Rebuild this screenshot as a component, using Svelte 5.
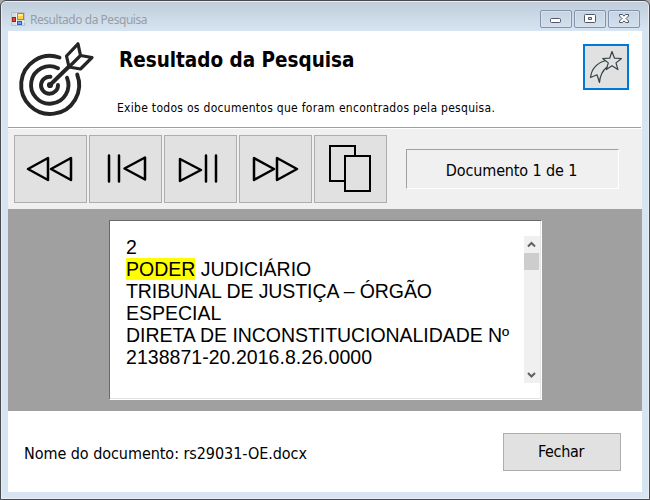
<script>
  const lines = [
    { text: 'TRIBUNAL DE JUSTIÇA – ÓRGÃO', spacing: -0.08 },
    { text: 'ESPECIAL', spacing: 0 },
    { text: 'DIRETA DE INCONSTITUCIONALIDADE Nº', spacing: -0.05 },
    { text: '2138871-20.2016.8.26.0000', spacing: 0.04 }
  ];
  const tools = ['first', 'previous', 'next', 'last', 'copy'];
</script>

<div class="window">
  <div class="titlebar">
    <svg class="appicon" width="15" height="15" viewBox="0 0 15 15">
      <path d="M.5 .5h13v13H.5z" fill="#d5dce5" stroke="#b9bec5" />
      <path d="M5.500 1v12M1 9.500h13" stroke="#eef1f5" />
      <rect x="6.500" y="1.500" width="6" height="6" fill="#ffd149" stroke="#bc8517" />
      <path d="M7 2h5v2H7z" fill="#ffe993" />
      <rect x="1.500" y="5.500" width="3" height="4" fill="#dc4b35" stroke="#a51c12" />
      <rect x="6.500" y="9.500" width="4" height="3" fill="#6f9ff2" stroke="#315eb8" />
    </svg>
    <span class="caption">Resultado da Pesquisa</span>
    <div class="controls">
      <span><svg width="30" height="16"><rect x="9.500" y="7.500" width="10" height="4" rx="1" fill="#fff" stroke="#52546b" /></svg></span>
      <span><svg width="30" height="16"><path fill-rule="evenodd" d="M10.500 3.500h9q1 0 1 1v6q0 1-1 1h-9q-1 0-1-1v-6q0-1 1-1zM13.500 6.500v2h3v-2z" fill="#fff" stroke="#52546b" /></svg></span>
      <span><svg width="30" height="16"><path d="M10.500 3.500h3l1.500 1.700 1.500-1.700h3v1.500l-2.500 2.500 2.500 2.500v1.500h-3l-1.500-1.700-1.500 1.700h-3V10l2.500-2.500L10.500 5z" fill="#fff" stroke="#52546b" /></svg></span>
    </div>
  </div>

  <div class="client">
    <header>
      <svg class="target" width="80" height="80" viewBox="0 0 80 80" fill="none" stroke="#252525" stroke-width="3.900" stroke-linecap="round" stroke-linejoin="round">
        <path d="M43.500 17.500A29 29 0 1 0 61.200 34.500" />
        <path d="M42 28.200A18.700 18.700 0 1 0 51 37.800" />
        <path d="M34.500 36.800A8.500 8.500 0 1 0 42 45" />
        <path d="M34 45 53.500 26" />
        <circle cx="34" cy="45" r="1.600" fill="#252525" stroke-width="3" />
        <path d="M53 27 50.500 16 62 3.800 64.500 15.500 53 27M64.500 15.500 76 17.500 64.500 29 53 27" stroke-width="3.200" />
      </svg>
      <div class="heading">
        <h1>Resultado da Pesquisa</h1>
        <p>Exibe todos os documentos que foram encontrados pela pesquisa.</p>
      </div>
      <button class="star" aria-label="Favorito">
        <svg width="42" height="42" viewBox="0 0 42 42" fill="none" stroke="#344247" stroke-width="1.200" stroke-linejoin="round">
          <path d="M27 5.500l2.500 6.700 7 .3-5.500 4.400 1.900 6.700-5.900-3.800-5.700 3.800 2-6.700-5.600-4.400 7-.3z" />
          <path d="M21 14.500C11.500 17 6.500 23.500 5.500 31.500l6.500-2.700 2.500 7.700C15 30 17 25 22 21" />
        </svg>
      </button>
    </header>

    <div class="toolbar">
      <div class="tools">
        {#each tools as tool}
          <button aria-label={tool}>
            <svg width="71" height="66" viewBox="0 0 71 66" fill="none" stroke="#000" stroke-width="2.500" stroke-linejoin="round" stroke-linecap="round">
              {#if tool === 'first'}
                <path d="M33 22v22L13 33zM56 22v22L36 33z" />
              {:else if tool === 'previous'}
                <path d="M19 19.500v26M29 19.500v26M55 21.500v22L34.500 32.500z" />
              {:else if tool === 'next'}
                <path d="M15 23v22L36 34zM41 19.500v26M51 19.500v26" />
              {:else if tool === 'last'}
                <path d="M14 22v22l20-11zM37 22v22l20-11z" />
              {:else}
                <path stroke-linejoin="miter" stroke-linecap="butt" stroke-width="2" d="M40 20V10H15v35h15M30 20h25v35H30z" />
              {/if}
            </svg>
          </button>
        {/each}
      </div>
      <div class="position"><span>Documento 1 de 1</span></div>
    </div>

    <main>
      <div class="document">
        <div class="text">
          <div>2</div>
          <div><mark>PODER</mark> JUDICIÁRIO</div>
          {#each lines as line}
            <div style="letter-spacing: {line.spacing}px">{line.text}</div>
          {/each}
        </div>
        <div class="scrollbar">
          <svg width="15" height="17"><path d="M4 10.500 7.500 7l3.500 3.500" fill="none" stroke="#606060" stroke-width="2" /></svg>
          <div class="thumb"></div>
          <svg class="down" width="15" height="17"><path d="M4 7 7.500 10.500 11 7" fill="none" stroke="#606060" stroke-width="2" /></svg>
        </div>
      </div>
    </main>

    <footer>
      <span class="filename">Nome do documento: rs29031-OE.docx</span>
      <button class="close"><span>Fechar</span></button>
    </footer>
  </div>
</div>

<style>
  :global(body) { margin: 0; background: #a9a9a9; overflow: hidden; }
  * { box-sizing: border-box; }
  .window {
    width: 650px; height: 500px; display: flex; flex-direction: column;
    padding: 0 7px 7px; border: 1px solid #4b4b4f; border-radius: 6px 6px 0 0;
    background: linear-gradient(#bfcddb, #d7e4f2 30px);
    box-shadow: inset 0 0 0 1px #e6edf5;
    font-family: "DejaVu Sans Condensed", "DejaVu Sans", sans-serif; color: #000;
  }
  svg { display: block; }
  .titlebar { height: 30px; flex: none; display: flex; padding-left: 3px; }
  .appicon { margin-top: 11px; flex: none; }
  .caption { margin: 11px 0 0 4px; font: 12px/16px "Noto Sans", sans-serif; color: #999da2; white-space: nowrap; letter-spacing: -.46px; }
  .controls { display: flex; gap: 2px; margin: 9px 2px 0 auto; }
  .controls span { width: 32px; height: 18px; border: 1px solid #8493ad; border-radius: 2px; background: linear-gradient(#c6d3e1, #d2dfed); box-shadow: inset 0 0 0 1px #d7e2ee; }
  .client { width: 634px; height: 461px; display: flex; flex-direction: column; background: #fff; }
  header { height: 97px; display: flex; border-bottom: 1px solid #a0a0a0; margin-right: 1px; }
  .target { margin: 9px 0 0 8px; }
  .heading { margin-left: 21px; }
  h1 { margin: 16px 0 0 2px; font-size: 20.500px; line-height: 27px; font-weight: 700; white-space: nowrap; letter-spacing: -.02px; }
  p { margin: 26px 0 0; font-size: 12px; line-height: 17px; white-space: nowrap; letter-spacing: .29px; }
  button { padding: 0; border: 1px solid #adadad; border-radius: 0; background: #e1e1e1; font-family: inherit; color: #000; }
  .star { width: 46px; height: 46px; margin: 13px 11px 0 auto; border: 2px solid #0078d7; }
  header .star { margin-right: 12px; }
  .toolbar { height: 80px; margin-top: 1px; background: #f0f0f0; display: flex; padding: 6px 0 0 6px; }
  .tools { display: flex; gap: 2px; }
  .tools button { width: 73px; height: 68px; }
  .position { width: 213px; height: 40px; margin: 14px 0 0 19px; border: 1px solid; border-color: #a0a0a0 #fff #fff #a0a0a0; font-size: 16px; line-height: 41px; text-align: center; letter-spacing: -.13px; text-indent: -2px; }
  main { height: 202px; background: #a0a0a0; padding: 11px 0 0 101px; }
  .document { width: 433px; height: 180px; display: flex; background: #fff; border: 1px solid; border-color: #696969 #fff #fff #696969; box-shadow: inset -1px -1px #e3e3e3; }
  .text { width: 414px; padding: 15px 0 0 16px; font: 19.500px/22px "Liberation Sans", Arial, sans-serif; white-space: nowrap; }
  mark { display: inline-block; background: #ff0; color: inherit; line-height: 22px; height: 22px; vertical-align: top; }
  .scrollbar { width: 16px; height: 147px; margin-top: 15px; background: #f0f0f0; display: flex; flex-direction: column; }
  .thumb { width: 15px; height: 17px; background: #cdcdcd; }
  .down { margin-top: auto; }
  footer { height: 81px; display: flex; justify-content: space-between; padding: 22px 21px 0 16px; font-size: 16px; }
  .filename { line-height: 41px; white-space: nowrap; letter-spacing: -.05px; }
  .close { width: 118px; height: 38px; font-size: 16px; line-height: 36px; letter-spacing: -.3px; text-indent: -2px; }
</style>
